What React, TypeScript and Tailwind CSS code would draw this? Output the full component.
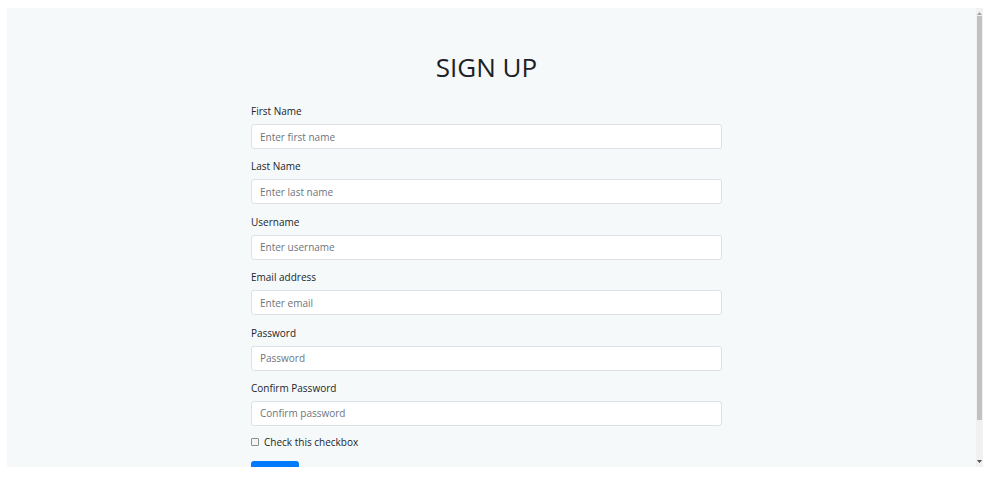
import React from "react";

const fields = [
  { label: "First Name", placeholder: "Enter first name", type: "text" },
  { label: "Last Name", placeholder: "Enter last name", type: "text" },
  { label: "Username", placeholder: "Enter username", type: "text" },
  { label: "Email address", placeholder: "Enter email", type: "email" },
  { label: "Password", placeholder: "Password", type: "password" },
  { label: "Confirm Password", placeholder: "Confirm password", type: "password" },
];

function Scrollbar() {
  return (
    <div className="flex h-full w-[7px] flex-col bg-[#f1f1f1]">
      <div className="flex h-[7px] items-end justify-center">
        <svg width="5" height="3" viewBox="0 0 5 3">
          <path d="M0 3 L2.5 0 L5 3 Z" fill="#a3a3a3" />
        </svg>
      </div>
      <div className="mx-[1px] mt-[1px] h-[404px] bg-[#c1c1c1]" />
      <div className="flex-1" />
      <div className="flex h-[7px] items-start justify-center">
        <svg width="5" height="3" viewBox="0 0 5 3">
          <path d="M0 0 L5 0 L2.5 3 Z" fill="#505050" />
        </svg>
      </div>
    </div>
  );
}

export default function App() {
  return (
    <div
      className="h-[481px] w-[996px] overflow-hidden bg-white pl-[7px] pt-2"
      style={{ fontFamily: '"Open Sans", "Noto Sans", sans-serif' }}
    >
      <div className="flex h-[459px] w-[976px] bg-[#f6f9fa]">
        <div className="flex-1 overflow-hidden">
          <h1 className="ml-[244px] mt-[41px] w-[471px] text-center text-[26px] leading-[36px] font-medium text-[#1e2125]">
            SIGN UP
          </h1>
          <form className="ml-[244px] mt-[18px] w-[471px]">
            {fields.map((f, i) => (
              <div key={f.label} className={i === fields.length - 1 ? "mb-[8px]" : "mb-[9.4px]"}>
                <label className="mb-[5px] block text-[10px] leading-4 text-[#212529]">{f.label}</label>
                <input
                  type={f.type}
                  placeholder={f.placeholder}
                  className="box-border block h-[25px] w-full rounded-[3px] border border-[#dde1e5] bg-white px-[8px] text-[10px] text-[#495057] outline-none placeholder:text-[#6c757d]"
                />
              </div>
            ))}
            <div className="mb-[9px] flex h-4 items-center">
              <input
                type="checkbox"
                className="m-0 h-[8px] w-[8px] appearance-none rounded-[1px] border border-[#8f8f8f] bg-[#f4f4f4]"
              />
              <span className="ml-[5px] text-[10px] leading-4 text-[#212529]">Check this checkbox</span>
            </div>
            <button
              type="submit"
              className="h-[25px] w-[48px] rounded-[3px] bg-[#007bff] text-[10px] leading-[25px] text-white"
            >
              Submit
            </button>
          </form>
        </div>
        <Scrollbar />
      </div>
    </div>
  );
}
